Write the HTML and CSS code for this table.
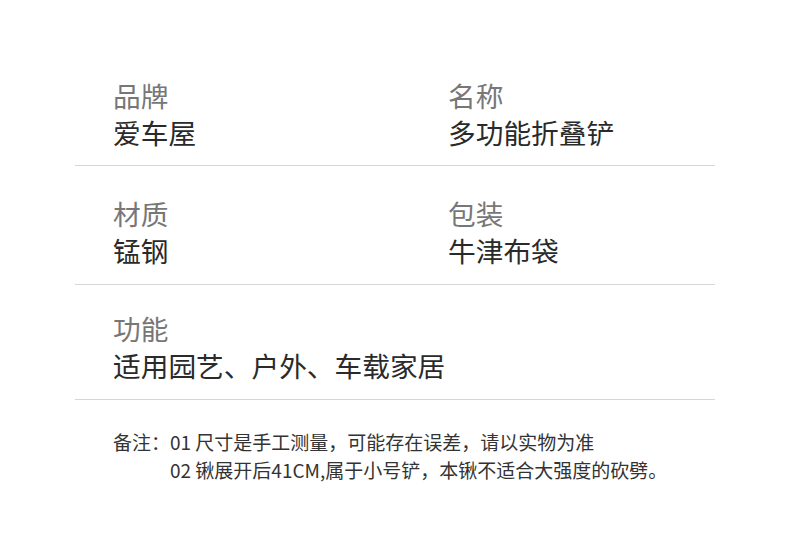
FILE: index.html
```html
<!DOCTYPE html>
<html lang="zh-CN">
<head>
<meta charset="utf-8">
<link rel="stylesheet" href="styles.css">
</head>
<body>
<div class="page">
  <div class="specs">
    <div class="row row-1">
      <div class="item"><div class="label">品牌</div><div class="value">爱车屋</div></div>
      <div class="item"><div class="label">名称</div><div class="value">多功能折叠铲</div></div>
    </div>
    <div class="row row-2">
      <div class="item"><div class="label">材质</div><div class="value">锰钢</div></div>
      <div class="item"><div class="label">包装</div><div class="value">牛津布袋</div></div>
    </div>
    <div class="row row-3">
      <div class="item"><div class="label">功能</div><div class="value">适用园艺、户外、车载家居</div></div>
    </div>
  </div>
  <div class="notes">
    <div class="notes-title">备注：</div>
    <div class="notes-list">
      <div>01 尺寸是手工测量，可能存在误差，请以实物为准</div>
      <div>02 锹展开后41CM,属于小号铲，本锹不适合大强度的砍劈。</div>
    </div>
  </div>
</div>
</body>
</html>
```

FILE: styles.css
```css
* { box-sizing: border-box; margin: 0; padding: 0; }
html, body { background: #fff; }
body {
  font-family: "Noto Sans CJK SC", "Noto Sans", sans-serif;
  width: 790px;
  height: 552px;
  overflow: hidden;
}
.page {
  width: 640px;
  margin: 0 0 0 75px;
  padding-top: 48px;
}
.row {
  display: grid;
  grid-template-columns: 335px auto;
  padding: 28px 0 14px 38px;
  border-bottom: 1px solid #d6d6d6;
}
.row-1 { padding-top: 29px; }
.row-2 { padding-top: 29px; padding-bottom: 15px; }
.row-3 { padding-top: 25px; padding-bottom: 15px; }
.label {
  font-size: 27.7px;
  line-height: 37px;
  color: #777;
}
.value {
  font-size: 27.7px;
  line-height: 37px;
  color: #2a2a2a;
}
.notes {
  display: flex;
  padding: 28px 0 0 38px;
  font-size: 19px;
  line-height: 28px;
  color: #333;
}
.notes-title { width: 57px; flex: none; }
```
